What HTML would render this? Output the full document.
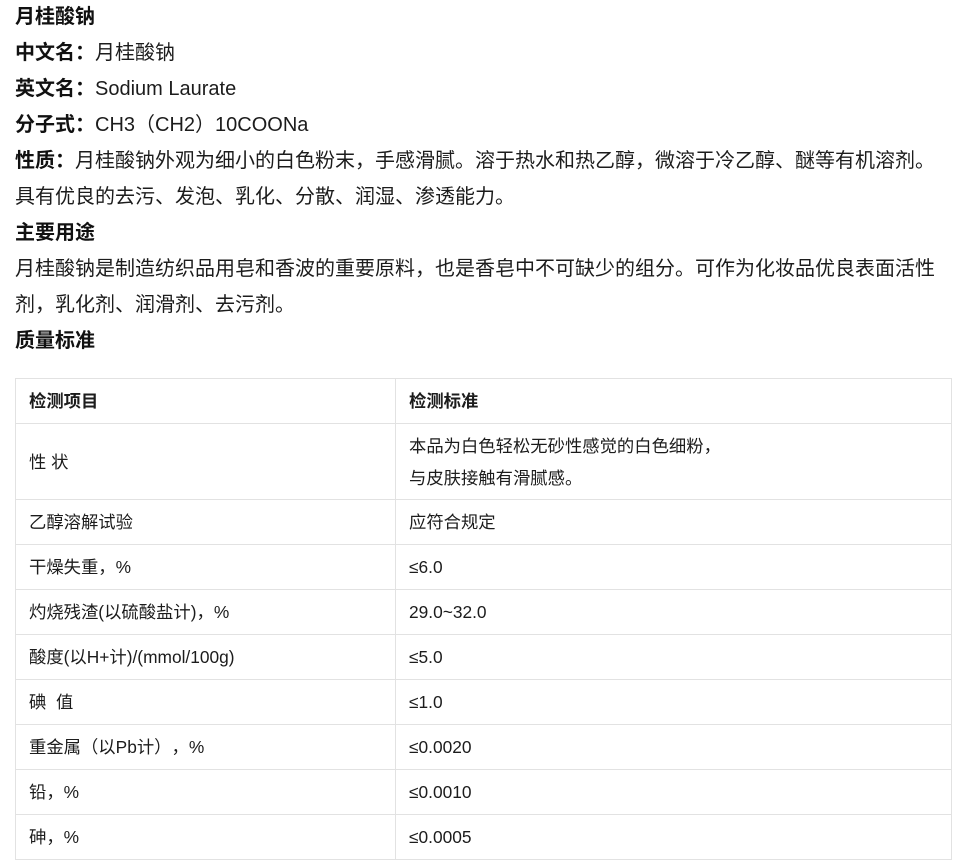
<!DOCTYPE html>
<html lang="zh">
<head>
<meta charset="utf-8">
<style>
html,body{margin:0;padding:0;background:#fff;width:958px;height:862px;overflow:hidden}
body{font-family:"Liberation Sans","Noto Sans CJK SC",sans-serif;color:#1c1c1c;position:relative;text-spacing-trim:space-all}
.t{position:absolute;left:15px;top:-1px;width:937px;font-size:20px;line-height:36px}
.t p{margin:0;white-space:nowrap}
.t b{color:#111}
table{position:absolute;left:15px;top:378px;width:937px;border-collapse:collapse;table-layout:fixed;font-size:17.33px;line-height:32px;color:#1c1c1c}
td{border:1px solid #e2e2e2;padding:0 13px;height:45px;box-sizing:border-box;white-space:nowrap}
tr.two td{height:76px}
td:first-child{width:380px}
</style>
</head>
<body>
<div class="t">
<p><b>月桂酸钠</b></p>
<p><b>中文名：</b>月桂酸钠</p>
<p><b>英文名：</b>Sodium Laurate</p>
<p><b>分子式：</b>CH3（CH2）10COONa</p>
<p><b>性质：</b>月桂酸钠外观为细小的白色粉末，手感滑腻。溶于热水和热乙醇，微溶于冷乙醇、醚等有机溶剂。</p>
<p>具有优良的去污、发泡、乳化、分散、润湿、渗透能力。</p>
<p><b>主要用途</b></p>
<p>月桂酸钠是制造纺织品用皂和香波的重要原料，也是香皂中不可缺少的组分。可作为化妆品优良表面活性</p>
<p>剂，乳化剂、润滑剂、去污剂。</p>
<p><b>质量标准</b></p>
</div>
<table>
<tr><td><b>检测项目</b></td><td><b>检测标准</b></td></tr>
<tr class="two"><td>性 状</td><td>本品为白色轻松无砂性感觉的白色细粉，<br>与皮肤接触有滑腻感。</td></tr>
<tr><td>乙醇溶解试验</td><td>应符合规定</td></tr>
<tr><td>干燥失重，%</td><td>≤6.0</td></tr>
<tr><td>灼烧残渣(以硫酸盐计)，%</td><td>29.0~32.0</td></tr>
<tr><td>酸度(以H+计)/(mmol/100g)</td><td>≤5.0</td></tr>
<tr><td>碘&nbsp; 值</td><td>≤1.0</td></tr>
<tr><td>重金属（以Pb计），%</td><td>≤0.0020</td></tr>
<tr><td>铅，%</td><td>≤0.0010</td></tr>
<tr><td>砷，%</td><td>≤0.0005</td></tr>
</table>
</body>
</html>
